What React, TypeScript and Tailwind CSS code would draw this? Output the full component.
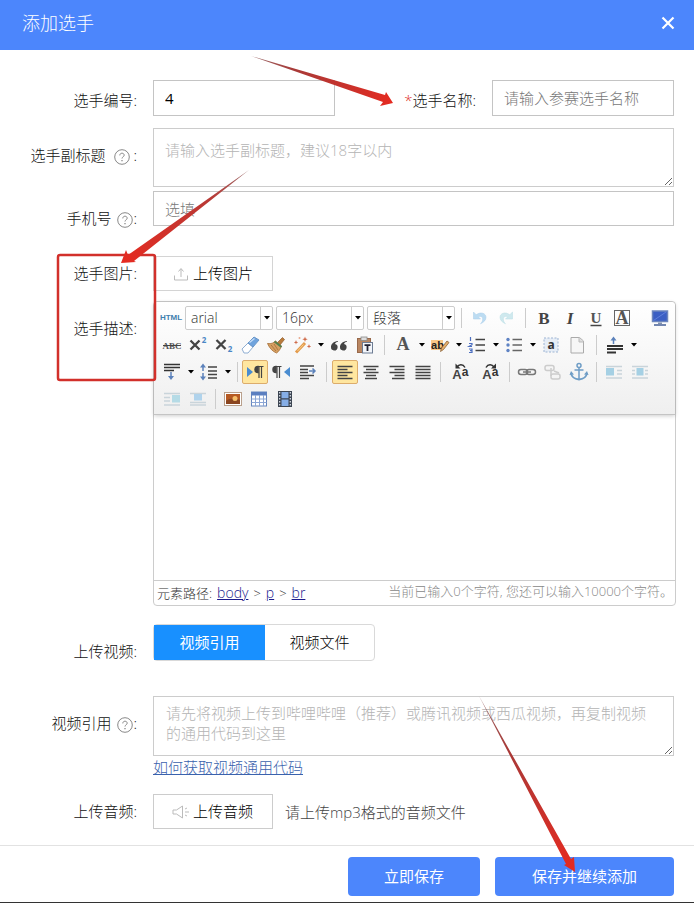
import { useState, type ReactNode } from "react";

function HelpIcon() {
  return (
    <svg viewBox="0 0 16 16" className="w-4 h-4 text-[#888]" fill="none" stroke="currentColor">
      <circle cx="8" cy="8" r="7.3" />
      <path d="M5.8 6.4c0-1.4 1-2.2 2.2-2.2s2.2.8 2.2 2c0 1.5-2.2 1.7-2.2 3.3" />
      <path d="M8 11v1.2" strokeWidth="1.3" />
    </svg>
  );
}

function Label({ htmlFor, help, className, children }: { htmlFor?: string; help?: boolean; className: string; children: ReactNode }) {
  return (
    <label htmlFor={htmlFor} className={`flex items-center justify-end shrink-0 leading-6 text-[#111] ${className}`}>
      {children}
      {help && (
        <span className="ml-1.5 mt-1">
          <HelpIcon />
        </span>
      )}
      <span>:</span>
    </label>
  );
}

function Caret() {
  return (
    <span className="w-[11px] flex justify-center">
      <svg viewBox="0 0 6 4" className="w-1.5 h-1">
        <path d="M0 0h6L3 3.6z" fill="#000" />
      </svg>
    </span>
  );
}

function Tool({ label, active, arrow, wide, children }: { label: string; active?: boolean; arrow?: boolean; wide?: boolean; children: ReactNode }) {
  return (
    <button type="button" aria-label={label} title={label} className="flex items-center shrink-0">
      <span
        className={`h-6 flex items-center justify-center ${wide ? "w-[30px]" : "w-[26px]"} ${
          active ? "bg-[#ffe69f] border border-[#dcac6c] rounded-xs" : ""
        }`}
      >
        <svg viewBox="0 0 20 20" className="w-5 h-5 shrink-0 overflow-visible" fill="none" stroke="#444" strokeWidth="1.5">
          {children}
        </svg>
      </span>
      {arrow && <Caret />}
    </button>
  );
}

function Sep({ wide, hidden }: { wide?: boolean; hidden?: boolean }) {
  return (
    <span className={`flex justify-center shrink-0 ${wide ? "w-3" : "w-[9px]"}`}>
      <span className={`w-px h-5 ${hidden ? "" : "bg-[#ccc]"}`} />
    </span>
  );
}

function Combo({ label, options }: { label: string; options: string[] }) {
  return (
    <span className="flex w-[88px] h-6 shrink-0 bg-white border border-[#ccc] rounded-xs">
      <select aria-label={label} className="appearance-none flex-1 min-w-0 pl-[5px] text-sm leading-5 text-[#333] outline-none">
        {options.map((o) => (
          <option key={o}>{o}</option>
        ))}
      </select>
      <span className="flex items-center border-l border-[#ccc]">
        <Caret />
      </span>
    </span>
  );
}

function Toolbar() {
  return (
    <div className="pt-0.5 pb-0.5 pl-1 overflow-hidden bg-linear-to-b from-white to-[#efefef] border-b border-[#c4c4c4] rounded-t shadow-[0_1px_4px_rgba(0,0,0,0.2)]">
      <div className="flex items-center h-[27px]">
        <Tool label="源代码">
          <text x="10" y="12" textAnchor="middle" fontSize="8" fontWeight="700" fill="#3f7fae" stroke="none" fontFamily="Liberation Sans, sans-serif">HTML</text>
        </Tool>
        <span className="flex gap-[3px] ml-px">
          <Combo label="字体" options={["arial", "宋体", "微软雅黑"]} />
          <Combo label="字号" options={["16px", "14px", "18px"]} />
          <Combo label="段落格式" options={["段落", "标题 1", "标题 2"]} />
        </span>
        <Sep wide />
        <Tool label="撤销">
          <path d="M3.5 4v7h7L8.3 8.8c2.2-1.3 4.2 0 4.4 2 .1 2-.8 3.6-2.2 5 3.5-1.6 5.5-3.8 5.5-6.6 0-4-5.3-5.7-9.8-2.5z" fill="#bcdcf2" stroke="#a9cde8" strokeWidth=".5" />
        </Tool>
        <Tool label="重做">
          <path d="M16.5 4v7h-7l2.2-2.2c-2.2-1.3-4.2 0-4.4 2-.1 2 .8 3.6 2.2 5C6 14.2 4 12 4 9.2c0-4 5.3-5.7 9.8-2.5z" fill="#cfe9ee" stroke="#b9dce4" strokeWidth=".5" />
        </Tool>
        <Sep wide />
        <Tool label="加粗">
          <text x="10" y="16" textAnchor="middle" fontSize="17" fontWeight="700" fontFamily="Liberation Serif, serif" fill="#444" stroke="none">B</text>
        </Tool>
        <Tool label="斜体">
          <text x="10" y="16" textAnchor="middle" fontSize="17" fontWeight="700" fontStyle="italic" fontFamily="Liberation Serif, serif" fill="#444" stroke="none">I</text>
        </Tool>
        <Tool label="下划线">
          <text x="10" y="15" textAnchor="middle" fontSize="15" fontWeight="700" fontFamily="Liberation Serif, serif" fill="#555" stroke="none">U</text>
          <path d="M4.5 17.5h11" />
        </Tool>
        <Tool label="字符边框">
          <rect x="2.5" y="2.5" width="15" height="15" strokeWidth="1" stroke="#666" />
          <text x="10" y="16" textAnchor="middle" fontSize="18" fontWeight="700" fontFamily="Liberation Serif, serif" fill="#555" stroke="none">A</text>
        </Tool>
        <Sep wide hidden />
        <Tool label="全屏">
          <rect x="2.5" y="3" width="15" height="10.5" fill="#3b5fc4" stroke="#6d86bd" />
          <path d="M3.5 12.5 16 4" stroke="#5f80dc" strokeWidth="1" />
          <path d="M8 14.5h4v1.5H8z" fill="#8191ad" stroke="none" />
          <path d="M4 17h12" stroke="#7286b0" strokeWidth="2" />
        </Tool>
      </div>

      <div className="flex items-center h-[27px] pl-px">
        <Tool label="删除线">
          <text x="10" y="14" textAnchor="middle" fontSize="9" fontWeight="700" fill="#555" stroke="none" fontFamily="Liberation Serif, serif">ABC</text>
          <path d="M1 10.5h18" strokeWidth="1.2" />
        </Tool>
        <Tool label="上标">
          <path d="m2.5 5.5 9 9m0-9-9 9" strokeWidth="2.3" />
          <text x="16" y="8" textAnchor="middle" fontSize="8" fontWeight="700" fill="#4a86c5" stroke="none">2</text>
        </Tool>
        <Tool label="下标">
          <path d="m2.5 5 9 9m0-9-9 9" strokeWidth="2.3" />
          <text x="16" y="17" textAnchor="middle" fontSize="8" fontWeight="700" fill="#4a86c5" stroke="none">2</text>
        </Tool>
        <Tool label="清除格式">
          <path d="m2 14 6-6 5 4-5 6H4z" fill="#fff" stroke="#8faed2" strokeWidth="1" />
          <path d="m8 8 6-6 5 3-6 7z" fill="#6fa3dd" stroke="#6795c9" strokeWidth="1" />
          <path d="m9.5 7.5 5-4" stroke="#c5ddf7" />
        </Tool>
        <Tool label="格式刷">
          <path d="m11.5 7.5 5-5 2 2-4.5 5.5z" fill="#b97a3a" stroke="#8e5c2d" strokeWidth=".7" />
          <path d="M1.5 8.5c4 .5 6-.5 8-2.5l6 5c-1 2.5-2.5 5.5-5 7-4-1.5-7-5-9-9.5z" fill="#d6a062" stroke="#a56d36" strokeWidth=".8" />
          <path d="m8.5 6.5 7 5.5" stroke="#557f4d" strokeWidth="2" />
          <path d="m5 10 5 6m-2-7 4 6" stroke="#9b6331" strokeWidth=".7" />
        </Tool>
        <Tool label="自动排版" arrow>
          <path d="m4 17.5 9-9.5" stroke="#e39b4c" strokeWidth="3" />
          <path d="m5.5 16 6-6.5" stroke="#f9d08e" strokeWidth="1" />
          <path d="m13 1.5.7 2 2 .7-2 .7-.7 2-.7-2-2-.7 2-.7zM4 5l.6 1.7 1.7.6-1.7.6L4 9.6l-.6-1.7-1.7-.6 1.7-.6zm13 4 .6 1.7 1.7.6-1.7.6-.6 1.7-.6-1.7-1.7-.6 1.7-.6z" fill="#cf6b4a" stroke="none" />
          <circle cx="7.5" cy="3" r="1" fill="#e8a88b" stroke="none" />
        </Tool>
        <Tool label="引用">
          <path d="M9 6c-4.5.5-7 3-7 6a3.3 3.3 0 1 0 4-3.1c.4-1 1.3-1.7 3-2.1zm9 0c-4.5.5-7 3-7 6a3.3 3.3 0 1 0 4-3.1c.4-1 1.3-1.7 3-2.1z" fill="#444" stroke="none" />
        </Tool>
        <Tool label="纯文本粘贴模式">
          <rect x="2.5" y="3.5" width="13" height="14" fill="#b98662" stroke="#98694b" strokeWidth="1" />
          <rect x="6" y="2" width="6" height="3.5" fill="#ddd" stroke="#888" strokeWidth=".8" />
          <rect x="7.5" y="7.5" width="10" height="10.5" fill="#f3f6fb" stroke="#6d7c93" strokeWidth="1" />
          <path d="M9.5 10.2h6M12.5 10v6" stroke="#223" strokeWidth="1.8" />
        </Tool>
        <Sep wide />
        <Tool label="字体颜色" arrow>
          <text x="10" y="15" textAnchor="middle" fontSize="18" fontWeight="700" fontFamily="Liberation Serif, serif" fill="#555" stroke="none">A</text>
        </Tool>
        <Tool label="背景色" arrow>
          <rect x="1" y="5" width="12" height="10" fill="#f8c888" stroke="none" />
          <text x="7.5" y="13.5" textAnchor="middle" fontSize="11" fontWeight="700" fill="#222" stroke="none" fontFamily="Liberation Sans, sans-serif">ab</text>
          <path d="m10.5 16.5 1-3.5 5.5-7 2 1.5-5.5 7z" fill="#e5b06d" stroke="#8c6236" strokeWidth=".8" />
        </Tool>
        <Tool label="有序列表" arrow>
          <path d="M8.5 4.5H18M8.5 10H18M8.5 15.5H18" />
          <path d="M3.5 2v4M2 8.5h3v1.2L2 11.5h3M2 14h3v3.5H2M3 15.7h2" stroke="#4c6fc0" strokeWidth="1.2" />
        </Tool>
        <Tool label="无序列表" arrow>
          <path d="M8.5 4.5H18M8.5 10H18M8.5 15.5H18" stroke="#666" />
          <g fill="#5f83c4" stroke="none">
            <circle cx="4" cy="4.5" r="1.7" />
            <circle cx="4" cy="10" r="1.7" />
            <circle cx="4" cy="15.5" r="1.7" />
          </g>
        </Tool>
        <Tool label="全选">
          <rect x="3" y="3" width="14" height="14" fill="#e6edf6" stroke="#9db4d3" strokeWidth="1" strokeDasharray="2 1.5" />
          <text x="10" y="14" textAnchor="middle" fontSize="12" fontWeight="700" fill="#333" stroke="none">a</text>
        </Tool>
        <Tool label="清空文档">
          <path d="M4 2.5h8.5L16.5 6v12H4z" fill="#f6f6f6" stroke="#aaa" strokeWidth="1" />
          <path d="M12 2.5V7h4.5" fill="#ddd" stroke="#bbb" strokeWidth="1" />
        </Tool>
        <Sep wide />
        <Tool label="段前距" arrow>
          <path d="M2 11h16M2 14h16M2 17.5h9" strokeWidth="2" stroke="#333" />
          <path d="M8.5 9V3" stroke="#5c82bb" />
          <path d="m5.5 5.5 3-4 3 4z" fill="#5c82bb" stroke="none" />
        </Tool>
      </div>

      <div className="flex items-center h-[27px] pl-px">
        <Tool label="段后距" arrow>
          <path d="M2 2.5h16M2 5.5h16M2 8.5h10" strokeWidth="1.7" stroke="#333" />
          <path d="M9 10v6" stroke="#5c82bb" />
          <path d="m6 14 3 4 3-4z" fill="#5c82bb" stroke="none" />
        </Tool>
        <Tool label="行间距" arrow>
          <path d="M9 5h9M9 9h9M9 12.5h9M9 16h9" strokeWidth="1.4" />
          <path d="M4 5v10" stroke="#5c82bb" strokeDasharray="4 2" />
          <path d="m1 5.5 3-4 3 4zm0 9 3 4 3-4z" fill="#5c82bb" stroke="none" />
        </Tool>
        <Sep />
        <Tool label="从左向右输入" active>
          <path d="m2 5 6 5-6 5z" fill="#4a8cd0" stroke="none" />
          <path d="M13 4.5a3 3 0 0 0 0 6z" fill="#444" />
          <path d="M12.5 4.5h6M14 4.5V16M16.5 4.5V16" strokeWidth="1.2" />
        </Tool>
        <Tool label="从右向左输入">
          <path d="m19 5-6 5 6 5z" fill="#4a8cd0" stroke="none" />
          <path d="M5 4.5a3 3 0 0 0 0 6z" fill="#444" />
          <path d="M4.5 4.5h6M6 4.5V16M8.5 4.5V16" strokeWidth="1.2" />
        </Tool>
        <Tool label="首行缩进">
          <path d="M3 4h14M3 7.5h8M3 10.5h8M3 13.5h14M3 16.5h9" />
          <path d="M12 9h6m-2.5-2.5L18 9l-2.5 2.5" stroke="#5c82bb" />
        </Tool>
        <Sep wide />
        <Tool label="居左对齐" active>
          <path d="M2.5 4.5h15M2.5 7.5h10M2.5 10.5h15M2.5 13.5h10M2.5 16.5h15" strokeWidth="1.3" />
        </Tool>
        <Tool label="居中对齐">
          <path d="M2.5 4.5h15M5 7.5h10M2.5 10.5h15M5 13.5h10M4 16.5h12" strokeWidth="1.3" />
        </Tool>
        <Tool label="居右对齐">
          <path d="M2.5 4.5h15M7.5 7.5h10M2.5 10.5h15M7.5 13.5h10M5 16.5h12.5" strokeWidth="1.3" />
        </Tool>
        <Tool label="两端对齐">
          <path d="M2.5 4.5h15M2.5 7.5h15M2.5 10.5h15M2.5 13.5h15M2.5 16.5h15" strokeWidth="1.3" />
        </Tool>
        <Sep />
        <Tool label="字母大写" wide>
          <text x="7" y="17" textAnchor="middle" fontSize="13" fontWeight="700" fill="#444" stroke="none" fontFamily="Liberation Sans, sans-serif">A</text>
          <text x="15" y="14" textAnchor="middle" fontSize="12" fontWeight="700" fill="#333" stroke="none" fontFamily="Liberation Sans, sans-serif">a</text>
          <path d="M7 5c2-3 6-3 8 .5" stroke="#333" />
          <path d="M5.5 1.5v5h5z" fill="#333" stroke="none" />
        </Tool>
        <Tool label="字母小写" wide>
          <text x="7" y="17" textAnchor="middle" fontSize="13" fontWeight="700" fill="#444" stroke="none" fontFamily="Liberation Sans, sans-serif">A</text>
          <text x="15" y="14" textAnchor="middle" fontSize="12" fontWeight="700" fill="#333" stroke="none" fontFamily="Liberation Sans, sans-serif">a</text>
          <path d="M6 5.5C8 2 12 2 14 5" stroke="#333" />
          <path d="M16 1.5v5h-5z" fill="#333" stroke="none" />
        </Tool>
        <Sep />
        <Tool label="超链接">
          <rect x="1.5" y="7.5" width="9" height="5" rx="2.5" stroke="#777" />
          <rect x="9.5" y="7.5" width="9" height="5" rx="2.5" stroke="#777" />
          <path d="M6 10h8" stroke="#777" />
        </Tool>
        <Tool label="取消链接">
          <g stroke="#ccc">
            <rect x="2" y="3.5" width="9" height="5" rx="2" />
            <rect x="8" y="12" width="9" height="5" rx="2" />
            <path d="M8 6v8m3-5 5 2" />
          </g>
        </Tool>
        <Tool label="锚点">
          <g stroke="#6f9dc6">
            <circle cx="10" cy="3.5" r="2" />
            <path d="M10 5.5V18M5.5 8h9" />
            <path d="M2 11c.5 4 4 6 8 6.5 4-.5 7.5-2.5 8-6.5" strokeWidth="1.8" />
          </g>
          <path d="m.5 13 1.5-4 3 3.5zm19 0L18 9l-3 3.5z" fill="#6f9dc6" stroke="none" />
        </Tool>
        <Sep />
        <Tool label="默认">
          <path d="M2 4.5h16M13 8.5h5M13 12h5M2 16h16" stroke="#c9d4da" />
          <path d="M2 6h8v7.5H2z" fill="#a5d0e4" stroke="none" />
        </Tool>
        <Tool label="左浮动">
          <path d="M2 4.5h16M2 8.5h3M2 12h3m10-3.5h3M15 12h3M2 16h16" stroke="#c9d4da" />
          <path d="M6.5 6h7v7.5h-7z" fill="#a5d0e4" stroke="none" />
        </Tool>
      </div>

      <div className="flex items-center h-[27px] pl-px">
        <Tool label="右浮动">
          <path d="M2 4.5h16M2 8.5h6M2 12h6M2 16h16" stroke="#c9d4da" />
          <path d="M10 6h8v7.5h-8z" fill="#b5dbe6" stroke="none" />
        </Tool>
        <Tool label="居中">
          <path d="M2 4.5h16M2 16h16M2 13.5h16" stroke="#c9d4da" />
          <path d="M6 5h8v6.5H6z" fill="#b0d3ec" stroke="none" />
        </Tool>
        <Sep />
        <Tool label="图片">
          <rect x="1.5" y="3.5" width="17" height="13" fill="#fff" stroke="#b9a08c" strokeWidth="1" />
          <path d="M3 5h14v10H3z" fill="#b65a23" stroke="none" />
          <path d="M3 12c4-3 9-3 14-1v4H3z" fill="#8a4520" stroke="none" />
          <circle cx="12" cy="9.5" r="2.5" fill="#f6bf6a" stroke="none" />
        </Tool>
        <Tool label="表格">
          <rect x="2.5" y="3" width="15" height="14" fill="#fff" stroke="#6585bd" strokeWidth="1" />
          <path d="M2.5 3h15v3.5h-15z" fill="#5b7fc0" stroke="none" />
          <path d="M2.5 10h15m-15 3.5h15M6.5 6v11m4-11v11m4-11v11" stroke="#8ba6d5" strokeWidth="1" />
        </Tool>
        <Tool label="视频">
          <path d="M3 2h14v16H3z" fill="#3c4552" stroke="none" />
          <path d="M6.5 3h7v6.2h-7zm0 7.5h7V17h-7z" fill="#86aee6" stroke="none" />
          <path d="M4.7 3v14M15.3 3v14" stroke="#dfe5ee" strokeWidth="1.2" strokeDasharray="1.5 1.5" />
        </Tool>
      </div>
    </div>
  );
}

// tapered arrows and the red frame drawn over the form
function Annotations() {
  return (
    <svg viewBox="0 0 694 903" className="absolute top-0 left-0 w-[694px] h-[903px] pointer-events-none" aria-hidden="true">
      <defs>
        <linearGradient id="a1" gradientUnits="userSpaceOnUse" x1="251" y1="56" x2="394" y2="103">
          <stop offset="0" stopColor="#9a6a6a" />
          <stop offset=".3" stopColor="#a83a38" />
          <stop offset="1" stopColor="#e62a20" />
        </linearGradient>
        <linearGradient id="a2" gradientUnits="userSpaceOnUse" x1="249" y1="170" x2="122" y2="263">
          <stop offset="0" stopColor="#9a6a6a" />
          <stop offset=".3" stopColor="#b83a36" />
          <stop offset="1" stopColor="#e62a20" />
        </linearGradient>
        <linearGradient id="a3" gradientUnits="userSpaceOnUse" x1="480" y1="697" x2="573" y2="870">
          <stop offset="0" stopColor="#9a6a6a" />
          <stop offset=".3" stopColor="#a83a38" />
          <stop offset="1" stopColor="#e62a20" />
        </linearGradient>
      </defs>
      <rect x="58" y="255" width="97" height="125" rx="2" fill="none" stroke="#d2302b" strokeWidth="2.5" />
      <path d="m251 56 134 39 1-3 7 11-13 3 3-4z" fill="url(#a1)" />
      <path d="m249 170-115 91 2 1-15 1 5-13 2 5z" fill="url(#a2)" />
      <path d="m479 696 92 163 3-2 1 15-11-7 2-1z" fill="url(#a3)" />
    </svg>
  );
}

export default function App() {
  const [tab, setTab] = useState("ref");

  return (
    <div className="relative bg-white text-[15px] text-[#111] font-light font-['Open_Sans','Noto_Sans_CJK_SC',sans-serif]">
      <header className="flex items-center justify-between h-[50px] pl-[22px] pr-[19px] pb-1 bg-[#4c86fc] text-white">
        <h1 className="text-lg leading-6">添加选手</h1>
        <button type="button" aria-label="关闭">
          <svg viewBox="0 0 14 14" className="w-3.5 h-3.5" stroke="currentColor" strokeWidth="2.2">
            <path d="m1.5 1.5 11 11m0-11-11 11" />
          </svg>
        </button>
      </header>

      <form onSubmit={(e) => e.preventDefault()}>
        <div className="pt-[30px] pr-5 pb-4">
          <div className="flex items-start">
            <Label htmlFor="no" className="w-[137px] mr-4 pt-2">选手编号</Label>
            <input id="no" defaultValue="4" className="flex-1 min-w-0 h-9 px-[11px] border border-[#c4c4c4] text-black font-normal outline-none" />
            <Label htmlFor="name" className="w-[141px] mr-4 pt-2">
              <span className="text-[#e0302a]">*</span>选手名称
            </Label>
            <input id="name" placeholder="请输入参赛选手名称" className="flex-1 min-w-0 h-9 px-[11px] border border-[#c4c4c4] placeholder:text-[#777] outline-none" />
          </div>

          <div className="flex items-start mt-3">
            <Label htmlFor="subtitle" help className="w-[137px] mr-4 pt-[15px] gap-[3px]">选手副标题</Label>
            <textarea id="subtitle" placeholder="请输入选手副标题，建议18字以内" className="block flex-1 min-w-0 h-[59px] px-[11px] py-[11px] leading-5 border border-[#ccc] placeholder:text-[#b4b4b4] outline-none" />
          </div>

          <div className="flex items-start mt-1">
            <Label htmlFor="phone" help className="w-[137px] mr-4 pt-[15px]">手机号</Label>
            <input id="phone" placeholder="选填" className="flex-1 min-w-0 h-[35px] px-[11px] border border-[#c4c4c4] placeholder:text-[#777] outline-none" />
          </div>

          <div className="flex items-start mt-[26px]">
            <Label htmlFor="image" className="w-[137px] mr-4 pt-[5px]">选手图片</Label>
            <button id="image" type="button" className="flex items-center h-[35px] pl-5 pr-[19px] gap-[5px] border border-[#d4d4d4] text-black">
              <svg viewBox="0 0 14 14" className="w-3.5 h-3.5" fill="none" stroke="#bbb">
                <path d="M.5 8.5V13h13V8.5M7 10V2M4.5 4.5l2.5-3 2.5 3" />
              </svg>
              上传图片
            </button>
          </div>

          <div className="flex items-start mt-2.5">
            <Label className="w-[137px] mr-4 pt-[15px]">选手描述</Label>
            <div className="flex-1 min-w-0 -mr-0.5 border border-[#ccc] rounded">
              <Toolbar />
              <div contentEditable suppressContentEditableWarning role="textbox" aria-label="选手描述" className="h-[165px] outline-none" />
              <div className="flex items-center justify-between h-[25px] pl-[3px] pr-0.5 border-t border-[#ccc] text-[13px] leading-5 text-[#333]">
                <span className="flex items-center gap-[5px]">
                  元素路径:
                  <a href="#body" className="text-sm text-[#1a1a8c] underline">body</a>
                  <span>&gt;</span>
                  <a href="#p" className="text-sm text-[#1a1a8c] underline">p</a>
                  <span>&gt;</span>
                  <a href="#br" className="text-sm text-[#1a1a8c] underline">br</a>
                </span>
                <span className="text-[#888] pb-1">当前已输入0个字符, 您还可以输入10000个字符。</span>
              </div>
            </div>
          </div>

          <div className="flex items-start mt-[18px]">
            <Label className="w-[137px] mr-4 pt-[15px]">上传视频</Label>
            <div className="flex h-[37px] border border-[#d9d9d9] rounded">
              <button
                type="button"
                onClick={() => setTab("ref")}
                className={`w-[111px] ${tab === "ref" ? "bg-[#1890ff] text-white font-normal" : "text-black"}`}
              >
                视频引用
              </button>
              <button
                type="button"
                onClick={() => setTab("file")}
                className={`w-[109px] ${tab === "file" ? "bg-[#1890ff] text-white font-normal" : "text-black"}`}
              >
                视频文件
              </button>
            </div>
          </div>

          <div className="flex items-start mt-[33px]">
            <Label htmlFor="video" help className="w-[137px] mr-4 pt-[15px]">视频引用</Label>
            <div className="flex-1 min-w-0">
              <textarea
                id="video"
                placeholder="请先将视频上传到哔哩哔哩（推荐）或腾讯视频或西瓜视频，再复制视频的通用代码到这里"
                className="block w-full h-[60px] pl-3 pr-4 pt-1.5 leading-5 border border-[#ccc] placeholder:text-[#b4b4b4] outline-none"
              />
              <a href="#help" className="block w-fit leading-[22px] text-[#3a62ad] underline">如何获取视频通用代码</a>
            </div>
          </div>

          <div className="flex items-start mt-4">
            <Label htmlFor="audio" className="w-[137px] mr-4 pt-[5px]">上传音频</Label>
            <button id="audio" type="button" className="flex items-center h-[35px] pl-[18px] pr-[19px] gap-[3px] border border-[#ccc] text-black">
              <svg viewBox="0 0 18 14" className="w-[18px] h-3.5" fill="none" stroke="#bbb">
                <path d="M1 5h3.5l6-4v12l-6-4H1zM13 4l2-1m-2 4h4m-4 3 2 1" />
              </svg>
              上传音频
            </button>
            <span className="ml-3 pt-1.5 leading-6 text-[#444]">请上传mp3格式的音频文件</span>
          </div>
        </div>

        <footer className="flex justify-end gap-[15px] pt-[11px] pb-1.5 pr-5 border-t border-b border-t-[#e2e2e2] border-b-[#333]">
          <button type="submit" className="w-[132px] h-[39px] rounded bg-[#4c86fc] text-white font-normal">立即保存</button>
          <button type="submit" className="w-[179px] h-[39px] rounded bg-[#4c86fc] text-white font-normal">保存并继续添加</button>
        </footer>
      </form>
      <Annotations />
    </div>
  );
}
